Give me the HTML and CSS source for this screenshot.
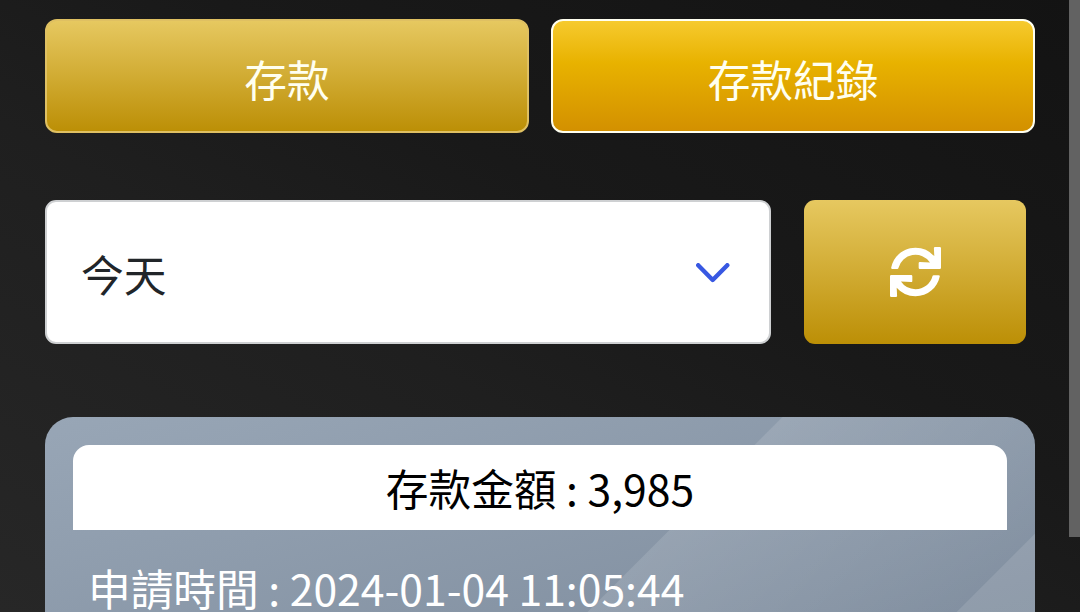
FILE: index.html
```html
<!DOCTYPE html>
<html lang="zh-Hant">
<head>
  <meta charset="UTF-8">
  <title>存款紀錄</title>
  <link rel="stylesheet" href="styles.css">
</head>
<body>

  <div class="page">
    <div class="tabs">
      <button class="tab">存款</button>
      <button class="tab active">存款紀錄</button>
    </div>

    <div class="filter">
      <div class="date-select">
        <span>今天</span>
        <svg class="chevron" viewBox="0 0 34 20">
          <path d="M2.2 2.2L16.7 17L31.3 2.2"/>
        </svg>
      </div>
      <button class="refresh">
        <svg viewBox="0 0 512 512" preserveAspectRatio="none">
          <path d="M440.65 12.57l4 82.77A247.16 247.16 0 0 0 255.83 8C134.73 8 33.91 94.92 12.29 209.82A12 12 0 0 0 24.09 224h49.05a12 12 0 0 0 11.67-9.26 175.91 175.91 0 0 1 317-56.94l-101.46-4.86a12 12 0 0 0-12.57 12v47.41a12 12 0 0 0 12 12H500a12 12 0 0 0 12-12V12a12 12 0 0 0-12-12h-47.37a12 12 0 0 0-11.98 12.57zM255.83 432a175.61 175.61 0 0 1-146-77.8l101.8 4.87a12 12 0 0 0 12.57-12v-47.4a12 12 0 0 0-12-12H12a12 12 0 0 0-12 12V500a12 12 0 0 0 12 12h47.35a12 12 0 0 0 12-12.6l-4.15-82.57A247.17 247.17 0 0 0 255.83 504c121.11 0 221.93-86.92 243.55-201.82a12 12 0 0 0-11.8-14.18h-49.05a12 12 0 0 0-11.67 9.26A175.86 175.86 0 0 1 255.83 432z"/>
        </svg>
      </button>
    </div>

    <div class="record">
      <div class="record-title">存款金額 : 3,985</div>
      <div class="record-row">申請時間 : 2024-01-04 11:05:44</div>
    </div>
  </div>

  <div class="scroll-thumb"></div>

</body>
</html>
```

FILE: styles.css
```css
* {
  margin: 0;
  padding: 0;
  box-sizing: border-box;
}

body {
  font-family: "Noto Sans CJK TC", sans-serif;
  font-size: 42.7px;
  line-height: 1.5;
  color: #fff;
  background: linear-gradient(to top right, #272727 0%, #1f1f1f 40%, #191919 60%, #131313 100%);
  height: 100vh;
  overflow: hidden;
  position: relative;
}

.page {
  padding: 19px 45px 0;
}

.tabs {
  display: flex;
  gap: 22px;
}

.tab {
  flex: 1;
  height: 114px;
  padding-top: 4px;
  font: inherit;
  line-height: 1;
  color: #fffff0;
  background: linear-gradient(#e6c860, #bc8f06);
  border: 2px solid #dfc062;
  border-radius: 12px;
}

.tab.active {
  background: linear-gradient(#f6ca2e 0%, #e8b200 38%, #d39000 100%);
  border-color: #fffff0;
}

.filter {
  display: flex;
  gap: 33px;
  margin-top: 67px;
}

.date-select {
  width: 726px;
  height: 144px;
  padding: 2px 39px 0 34px;
  display: flex;
  justify-content: space-between;
  align-items: center;
  color: #212529;
  background: #fff;
  border: 2px solid #ced0d2;
  border-radius: 11px;
}

.chevron {
  width: 34px;
  height: 20px;
  fill: none;
  stroke: #3858e2;
  stroke-width: 4.4;
  stroke-linecap: round;
  stroke-linejoin: round;
}

.refresh {
  width: 222px;
  height: 144px;
  padding-left: 1px;
  display: flex;
  justify-content: center;
  align-items: center;
  background: linear-gradient(#e6c860, #bc8f06);
  border: none;
  border-radius: 11px;
}

.refresh svg {
  width: 51px;
  height: 50px;
  fill: #fff;
}

.record {
  height: 195px;
  margin-top: 73px;
  padding: 28px 28px 0;
  border-radius: 28px 28px 0 0;
  background:
    linear-gradient(135deg, transparent 521px, rgba(255, 255, 255, 0.12) 522px, rgba(255, 255, 255, 0.02) 782px, rgba(255, 255, 255, 0.13) 783px),
    linear-gradient(165deg, #98a6b6 0%, #7f8d9e 100%);
}

.record-title {
  height: 85px;
  line-height: 85px;
  text-align: center;
  color: #000;
  background: #fff;
  border-radius: 16px 16px 0 0;
}

.record-row {
  padding: 36px 15px 0;
  line-height: 1;
}

.scroll-thumb {
  position: absolute;
  top: 0;
  right: 0;
  width: 11px;
  height: 537px;
  background: #626262;
}
```
